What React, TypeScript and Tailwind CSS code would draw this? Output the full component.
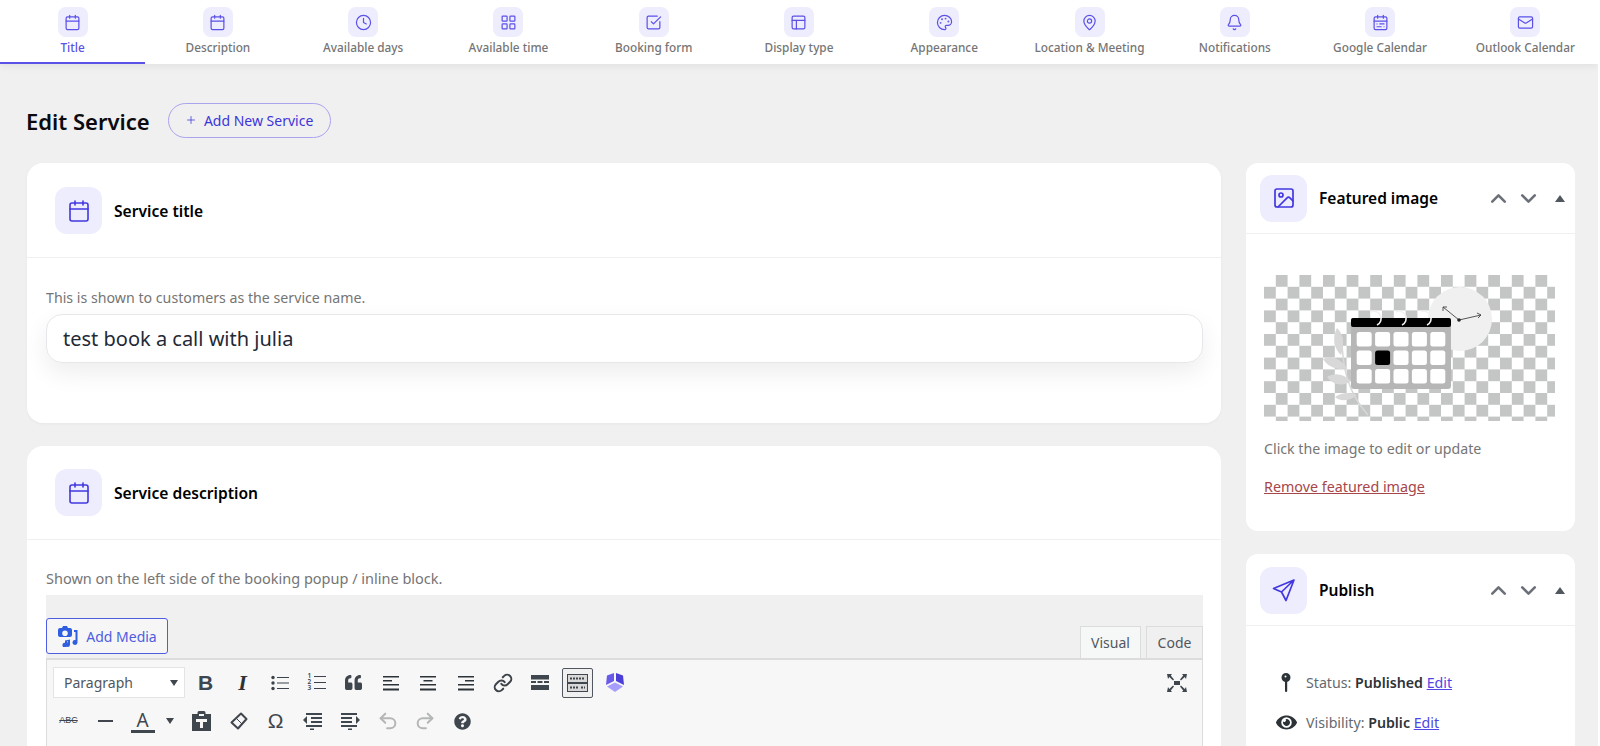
import type { ReactNode } from 'react';
import {
  Bell, Calendar, ChevronDown, ChevronUp, Clock, Image, LayoutGrid, Link, Mail, MapPin,
  PanelsTopLeft, Palette, Plus, Redo2, SquareCheckBig, Undo2, CalendarRange,
} from 'lucide-react';
import { FaEye, FaQuestionCircle, FaQuoteLeft } from 'react-icons/fa';

const font = "font-['Noto_Sans','Open_Sans',sans-serif]";

const tabs = [
  { label: 'Title', icon: Calendar },
  { label: 'Description', icon: Calendar },
  { label: 'Available days', icon: Clock },
  { label: 'Available time', icon: LayoutGrid },
  { label: 'Booking form', icon: SquareCheckBig },
  { label: 'Display type', icon: PanelsTopLeft },
  { label: 'Appearance', icon: Palette },
  { label: 'Location & Meeting', icon: MapPin },
  { label: 'Notifications', icon: Bell },
  { label: 'Google Calendar', icon: CalendarRange },
  { label: 'Outlook Calendar', icon: Mail },
];

function IconBox({ children }: { children: ReactNode }) {
  return (
    <div className="w-[47px] h-[47px] rounded-xl bg-[#eeedfd] text-[#4338e0] flex items-center justify-center shrink-0">
      {children}
    </div>
  );
}

function CardHead({ title, icon, flat }: { title: string; icon: ReactNode; flat?: boolean }) {
  return (
    <div className={`${flat ? 'h-[94px]' : 'h-[95px] pt-[1px]'} pl-[28px] flex items-center gap-[12px] border-b border-[#f0f0f1]`}>
      <IconBox>{icon}</IconBox>
      <h2 className="pt-[2px] text-[15.6px] font-semibold text-black">{title}</h2>
    </div>
  );
}

function SideHead({ title, icon, tall }: { title: string; icon: ReactNode; tall?: boolean }) {
  return (
    <div className={`${tall ? 'h-[72px] pt-[1px]' : 'h-[71px]'} pl-[14px] pr-[10px] flex items-center border-b border-[#f0f0f1]`}>
      <IconBox>{icon}</IconBox>
      <h2 className="ml-[12px] pt-[2px] text-[15.5px] font-semibold text-black flex-1">{title}</h2>
      <ChevronUp size={25} strokeWidth={2.5} className="text-[#6b7078]" />
      <ChevronDown size={25} strokeWidth={2.5} className="text-[#6b7078] ml-[5px]" />
      <span className="ml-[14px] w-0 h-0 border-x-[5px] border-x-transparent border-b-[7px] border-b-[#50575e]" />
    </div>
  );
}

function Tool({ children, wide }: { children: ReactNode; wide?: boolean }) {
  return (
    <div className={`${wide ? 'w-[38px]' : 'w-[37px]'} h-[30px] flex items-center justify-center text-[#40464d] shrink-0`}>
      {children}
    </div>
  );
}

function Lines({ align }: { align: 'left' | 'center' | 'right' }) {
  const short = align === 'left' ? [1, 11] : align === 'center' ? [4.5, 11] : [8, 11];
  return (
    <svg width="18" height="16" viewBox="0 0 18 16" fill="#2c3338">
      <rect x="1" y="1" width="16" height="1.5" />
      <rect x={short[0]} y="5" width={short[1] - 2} height="1.5" />
      <rect x="1" y="9" width="16" height="1.5" />
      <rect x="1" y="13.5" width="16" height="2" />
    </svg>
  );
}

function Featured() {
  return (
    <svg viewBox="0 0 291 146" className="w-[291px] h-[146px] block">
      <defs>
        <pattern id="check" width="23.6" height="23.6" patternUnits="userSpaceOnUse">
          <rect width="23.6" height="23.6" fill="#fff" />
          <rect x="11.8" width="11.8" height="11.8" fill="#c4c6c6" />
          <rect y="11.8" width="11.8" height="11.8" fill="#c4c6c6" />
        </pattern>
      </defs>
      <rect width="291" height="146" fill="url(#check)" />
      <circle cx="196" cy="44" r="32" fill="#f0f0f0" />
      <path d="M179 32 L195 45 L217 40" fill="none" stroke="#444" strokeWidth="0.9" />
      <path d="M179 36 L179 32 L183 32 M213 38 L217 40 L214 43" fill="none" stroke="#444" strokeWidth="0.9" />
      <circle cx="195" cy="45" r="1.800" fill="#222" />
      <path d="M73 53c6 5 8 16 4 27-7-6-9-18-4-27zM59 84c9-4 18 0 24 9-9 3-19-1-24-9zM63 102c8-5 17-3 24 4-8 6-18 4-24-4zM71 122c7-5 15-5 22-2-7 6-16 7-22 2z" fill="#d8d8d8" />
      <path d="M78 62 C78 92 84 118 104 140" fill="none" stroke="#d8d8d8" strokeWidth="1.5" />
      <rect x="87" y="43" width="100" height="71" rx="3" fill="#b6b6b6" />
      <rect x="87" y="43" width="100" height="9" rx="2" fill="#000" />
      <path d="M107 37a6.500 6.500 0 0 1 6 13M132 37a6.500 6.500 0 0 1 6 13M157 37a6.500 6.500 0 0 1 6 13" fill="none" stroke="#f2f2f2" strokeWidth="1.6" />
      {[0, 1, 2].map((r) =>
        [0, 1, 2, 3, 4].map((c) => (
          <rect key={`${r}-${c}`} x={92.7 + c * 18.4} y={57 + r * 18.5} width="15" height="14.5" rx="2.500" fill={r === 1 && c === 1 ? '#000' : '#fff'} />
        )),
      )}
    </svg>
  );
}

export default function App() {
  return (
    <div className="h-screen overflow-hidden bg-white">
      <div className={`w-[1598px] h-full overflow-hidden bg-[#f0f0f1] flex flex-col ${font}`}>
        <nav className="h-[64px] bg-white grid grid-cols-11 shrink-0 shadow-[0_2px_8px_rgba(0,0,0,0.07)] relative">
          {tabs.map((t, i) => (
            <div key={t.label} className={`flex flex-col items-center pt-[7px] ${i === 0 ? 'border-b-2 border-[#5b50e8]' : ''}`}>
              <div className="w-[30px] h-[30px] rounded-lg bg-[#eeedfd] text-[#5b50e8] flex items-center justify-center">
                <t.icon size={17} strokeWidth={1.7} />
              </div>
              <span className={`mt-[2px] text-[11.8px] font-medium whitespace-nowrap ${i === 0 ? 'text-[#5b50e8]' : 'text-[#757575]'}`}>{t.label}</span>
            </div>
          ))}
        </nav>

        <main className="pl-[27px] pr-[23px]">
          <div className="h-[99px] flex items-center pb-[2px] pt-[15px]">
            <h1 className="-ml-[1px] mt-[2px] text-[22px] font-semibold text-[#0b0b0f]">Edit Service</h1>
            <button className="ml-[18px] h-[35px] w-[163px] rounded-full border border-[#a9a4ee] flex items-center justify-center gap-[7px] text-[#3d35d8] text-[14px]">
              <Plus size={12} strokeWidth={1.5} />
              Add New Service
            </button>
          </div>

          <div className="flex gap-[25px] items-start">
            <div className="flex-1 flex flex-col gap-[23px] min-w-0">
              <section className="h-[260px] bg-white rounded-2xl shadow-[0_1px_3px_rgba(0,0,0,0.04)]">
                <CardHead title="Service title" icon={<Calendar size={24} strokeWidth={1.6} />} />
                <div className="pt-[30px] pl-[19px] pr-[18px]">
                  <p className="text-[14.2px] leading-[20px] text-[#757575]">This is shown to customers as the service name.</p>
                  <div className="mt-[6px] h-[49px] rounded-2xl border border-[#e6e7ea] pl-[16px] flex items-center text-[20px] text-[#1f2937] shadow-[0_10px_24px_rgba(0,0,0,0.07)]">
                    test book a call with julia
                  </div>
                </div>
              </section>

              <section className="bg-white rounded-2xl">
                <CardHead flat title="Service description" icon={<Calendar size={24} strokeWidth={1.6} />} />
                <div className="pt-[28px] pl-[19px] pr-[18px]">
                  <p className="text-[14.5px] leading-[20px] text-[#757575]">Shown on the left side of the booking popup / inline block.</p>
                  <div className="mt-[7px] bg-[#f0f0f1] h-[63px] flex items-end justify-between">
                    <button className="mb-[4px] h-[36px] w-[122px] rounded-[3px] border border-[#4f5de0] bg-white/40 flex items-center justify-center gap-[7px] text-[14px] text-[#4f5de0]">
                      <svg width="22" height="22" viewBox="0 0 22 22" fill="#2f5fe0">
                        <path d="M3 3h2l1-2h4l1 2h2a2 2 0 0 1 2 2v5a2 2 0 0 1-2 2H3a2 2 0 0 1-2-2V5a2 2 0 0 1 2-2zm5 2.500a2.800 2.800 0 1 0 0 5.600 2.800 2.800 0 0 0 0-5.600z" />
                        <path d="M17 5h3.500v12.500a2.500 2.500 0 1 1-2-2.400V7H17zM8 15.500l5-1v5a2.300 2.300 0 1 1-2-2.200v-1l-1 .2v3.500a2.300 2.300 0 1 1-2-2.200z" />
                      </svg>
                      Add Media
                    </button>
                    <div className="flex gap-[5px] text-[14px] text-[#50575e]">
                      <div className="w-[61px] h-[32px] bg-[#f6f7f7] border border-[#dcdcde] border-b-0 flex items-center justify-center">Visual</div>
                      <div className="w-[57px] h-[32px] bg-[#f0f0f1] border border-[#dcdcde] border-b-0 flex items-center justify-center">Code</div>
                    </div>
                  </div>
                  <div className="border border-[#dcdcde] border-t-2 bg-[#f7f7f7] h-[120px] pl-[6px] pr-[5px] pt-[7px]">
                    <div className="flex items-center">
                      <div className="w-[132px] h-[31px] bg-white border border-[#e4e4e6] pl-[10px] pr-[6px] flex items-center justify-between text-[14px] text-[#50575e] shrink-0">
                        Paragraph
                        <span className="w-0 h-0 border-x-[4.500px] border-x-transparent border-t-[6px] border-t-[#40464d]" />
                      </div>
                      <div className="ml-[2px]" />
                      <Tool><span className="font-['Liberation_Sans',sans-serif] font-bold text-[21px] text-[#3c4650]">B</span></Tool>
                      <Tool><span className="font-['Liberation_Serif',serif] italic font-bold text-[22px] text-[#2c3338]">I</span></Tool>
                      <Tool>
                        <svg width="18" height="16" viewBox="0 0 18 16" fill="#3c434a">
                          <circle cx="2" cy="2.500" r="1.700" /><circle cx="2" cy="8" r="1.700" /><circle cx="2" cy="13.500" r="1.700" />
                          <rect x="6" y="2" width="12" height="1" /><rect x="6" y="7.500" width="12" height="1" /><rect x="6" y="13" width="12" height="1" />
                        </svg>
                      </Tool>
                      <Tool>
                        <div className="relative w-[18px] h-[17px]">
                          <span className="absolute left-0 top-[-1px] flex flex-col text-[6.500px] leading-[6.200px] text-[#3c434a] font-semibold"><span>1</span><span>2</span><span>3</span></span>
                          <div className="absolute right-0 top-[2px] w-[12px] h-[1px] bg-[#3c434a]" />
                          <div className="absolute right-0 top-[8px] w-[12px] h-[1px] bg-[#3c434a]" />
                          <div className="absolute right-0 top-[14px] w-[12px] h-[1px] bg-[#3c434a]" />
                        </div>
                      </Tool>
                      <Tool><FaQuoteLeft size={17} className="text-[#40464d]" /></Tool>
                      <Tool><Lines align="left" /></Tool>
                      <Tool wide><Lines align="center" /></Tool>
                      <Tool><Lines align="right" /></Tool>
                      <Tool><Link size={20} strokeWidth={2.4} className="text-[#3c434a]" /></Tool>
                      <Tool wide>
                        <svg width="18" height="15" viewBox="0 0 18 15" fill="#40464d">
                          <rect y="0" width="18" height="4.500" /><rect y="6" width="5" height="2" /><rect x="6.500" y="6" width="5" height="2" /><rect x="13" y="6" width="5" height="2" /><rect y="10" width="18" height="5" />
                        </svg>
                      </Tool>
                      <Tool>
                        <div className="w-[31px] h-[30px] rounded-[2px] border border-[#50575e] bg-[#f0f0f1] flex items-center justify-center">
                          <svg width="21" height="18" viewBox="0 0 21 18">
                            <rect x="0.500" y="0.500" width="20" height="8" fill="#d8d8d8" stroke="#40464d" />
                            <rect x="0.500" y="9.500" width="20" height="8" fill="#d8d8d8" stroke="#40464d" />
                            <path d="M3 4.500h15M3 13.500h9M14 13.500h4" stroke="#40464d" strokeWidth="2" strokeDasharray="2 1" />
                          </svg>
                        </div>
                      </Tool>
                      <Tool>
                        <svg width="20" height="21" viewBox="0 0 20 21">
                          <path d="M9 1 2 3.500 1 13l8-4z" fill="#6a5ae8" />
                          <path d="M11 1l7 2.500 1 9.500-8-4z" fill="#4b3fd8" />
                          <path d="M10 10.500l8 4-8 5.500-8-5.500z" fill="#a79dfa" />
                        </svg>
                      </Tool>
                      <div className="ml-auto mr-[10px]">
                        <svg width="20" height="18" viewBox="0 0 20 18" fill="#40464d">
                          <rect x="7" y="7" width="6" height="4" />
                          <path d="M0 0h5L3.800 1.500 7 5.500 6 6.500 2.300 3 1 5zM20 0h-5l1.200 1.500L13 5.500l1 1L17.700 3 19 5zM0 18h5l-1.200-1.500L7 12.500l-1-1L2.300 15 1 13zM20 18h-5l1.200-1.500-3.200-4 1-1 3.700 3.500L19 13z" />
                        </svg>
                      </div>
                    </div>

                    <div className="flex items-center mt-[8px] -ml-[3px]">
                      <Tool><span className="text-[9px] font-['Liberation_Sans',sans-serif] line-through text-[#40464d]">ABC</span></Tool>
                      <Tool><div className="w-[15px] h-[2.500px] bg-[#40464d]" /></Tool>
                      <Tool>
                        <span className="flex flex-col items-center w-[24px]">
                          <span className="text-[19px] leading-[20px] text-[#40464d]">A</span>
                          <span className="w-[24px] h-[3px] bg-[#40464d]" />
                        </span>
                      </Tool>
                      <div className="w-[18px] flex justify-center">
                        <span className="w-0 h-0 border-x-[4.500px] border-x-transparent border-t-[6px] border-t-[#40464d]" />
                      </div>
                      <div className="w-[4px]" />
                      <Tool>
                        <svg width="19" height="20" viewBox="0 0 19 20" fill="#40464d">
                          <path d="M0 3h5.500V1.500A1.500 1.500 0 0 1 7 0h5a1.500 1.500 0 0 1 1.500 1.500V3H19v17H0zM7 3v2h5V3zM4 8v3h4v6h3v-6h4V8z" />
                        </svg>
                      </Tool>
                      <Tool>
                        <svg width="18" height="18" viewBox="0 0 18 18" fill="none" stroke="#40464d" strokeWidth="2">
                          <path d="M11 1.500 16.500 7 8 16.500 1.500 10.500z" strokeLinejoin="round" />
                          <path d="M6 6l6 6" strokeWidth="1" />
                        </svg>
                      </Tool>
                      <Tool><span className="text-[21px] text-[#40464d] font-['Liberation_Sans',sans-serif]">Ω</span></Tool>
                      <Tool>
                        <svg width="19" height="18" viewBox="0 0 19 18" fill="#40464d">
                          <rect x="3" y="1" width="16" height="2" /><rect x="8" y="5" width="11" height="2" /><rect x="8" y="9" width="11" height="2" /><rect x="3" y="13" width="16" height="2" /><rect x="7" y="16.500" width="4" height="1.500" />
                          <path d="M0 8l4-4v8z" />
                        </svg>
                      </Tool>
                      <Tool wide>
                        <svg width="19" height="18" viewBox="0 0 19 18" fill="#40464d">
                          <rect x="0" y="1" width="16" height="2" /><rect x="0" y="5" width="11" height="2" /><rect x="0" y="9" width="11" height="2" /><rect x="0" y="13" width="16" height="2" /><rect x="7" y="16.500" width="4" height="1.500" />
                          <path d="M19 8l-4-4v8z" />
                        </svg>
                      </Tool>
                      <Tool><Undo2 size={22} strokeWidth={2.2} className="text-[#b4b6b8]" /></Tool>
                      <Tool wide><Redo2 size={22} strokeWidth={2.2} className="text-[#b4b6b8]" /></Tool>
                      <Tool><FaQuestionCircle size={17} className="text-[#40464d]" /></Tool>
                    </div>
                  </div>
                </div>
              </section>
            </div>

            <aside className="w-[329px] shrink-0 flex flex-col gap-[23px]">
              <section className="h-[368px] bg-white rounded-xl">
                <SideHead title="Featured image" icon={<Image size={24} strokeWidth={1.7} />} />
                <div className="pt-[41px] pl-[18px] pr-[19px]">
                  <Featured />
                  <p className="mt-[18px] text-[14.2px] leading-[20px] text-[#757575]">Click the image to edit or update</p>
                  <a className="block mt-[18px] text-[14.3px] leading-[20px] text-[#a6464b] underline">Remove featured image</a>
                </div>
              </section>

              <section className="bg-white rounded-xl pb-[100px]">
                <SideHead
                  tall
                  title="Publish"
                  icon={
                    <svg width="24" height="24" viewBox="0 0 24 24" fill="none" stroke="currentColor" strokeWidth="1.7" strokeLinejoin="round">
                      <path d="M22 2 1.500 10.500 9.500 14 14 22.500zM22 2 9.500 14" />
                    </svg>
                  }
                />
                <div className="pt-[46px] pl-[28px] flex flex-col gap-[18px] text-[14.2px] leading-[20px] text-[#646970]">
                  <div className="flex items-center">
                    <svg width="24" height="22" viewBox="0 0 24 22" fill="#2c3338" className="mr-[8px]">
                      <path fillRule="evenodd" d="M12 1a4.500 4.500 0 1 1 0 9 4.500 4.500 0 0 1 0-9zm-.5 2.500a1 1 0 1 0 0 2 1 1 0 0 0 0-2z" />
                      <rect x="11" y="9" width="2.200" height="11" rx="1" />
                    </svg>
                    <span>Status: <b className="font-semibold text-[#2c3338]">Published</b> <a className="text-[#4f46e5] underline">Edit</a></span>
                  </div>
                  <div className="flex items-center">
                    <div className="w-[24px] flex justify-center mr-[8px]"><FaEye size={21} className="text-[#2c3338]" /></div>
                    <span>Visibility: <b className="font-semibold text-[#2c3338]">Public</b> <a className="text-[#4f46e5] underline">Edit</a></span>
                  </div>
                </div>
              </section>
            </aside>
          </div>
        </main>
      </div>
    </div>
  );
}
